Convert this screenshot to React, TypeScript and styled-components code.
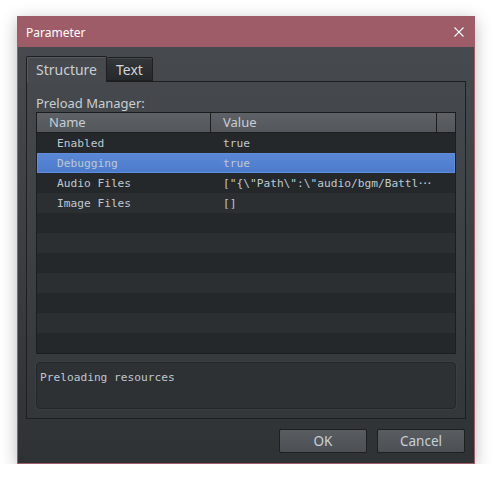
import React, { FC } from 'react';
import styled, { createGlobalStyle } from 'styled-components';

const GlobalStyle = createGlobalStyle`
  html, body {
    margin: 0;
    padding: 0;
    background: #ffffff;
  }
  * {
    box-sizing: border-box;
  }
`;

const uiFont = `'Noto Sans', 'Open Sans', sans-serif`;
const monoFont = `'DejaVu Sans Mono', 'Liberation Mono', monospace`;

const Window = styled.div`
  margin: 16px 0 0 17px;
  width: 458px;
  height: 448px;
  border: 1px solid #9e5c68;
  display: flex;
  flex-direction: column;
  box-shadow: 0 4px 16px rgba(0, 0, 0, 0.28);
  font-family: ${uiFont};
`;

const TitleBar = styled.div`
  height: 30px;
  flex: none;
  display: flex;
  align-items: center;
  justify-content: space-between;
  padding: 0 10px 0 8px;
  background: #9e5c68;
  color: #ffffff;
  font-size: 12px;
`;

const CloseButton = styled.div`
  width: 10px;
  height: 10px;
  display: flex;
`;

const Body = styled.div`
  flex: 1;
  display: flex;
  flex-direction: column;
  padding: 9px 8px 10px 8px;
  background: linear-gradient(#464a4e, #2f3235);
`;

const TabStrip = styled.div`
  display: flex;
  height: 25px;
  flex: none;
  align-items: flex-end;
  position: relative;
  z-index: 1;
`;

const Tab = styled.div<{ $active?: boolean }>`
  height: ${(p) => (p.$active ? '26px' : '24px')};
  margin-bottom: ${(p) => (p.$active ? '-1px' : '0')};
  padding: 0 9px;
  display: flex;
  align-items: center;
  font-size: 14px;
  border: 1px solid #1d1f21;
  border-bottom: ${(p) => (p.$active ? 'none' : '1px solid #1d1f21')};
  border-left: ${(p) => (p.$active ? '1px solid #1d1f21' : 'none')};
  background: ${(p) =>
    p.$active ? '#46494d' : 'linear-gradient(#34373a, #26292c)'};
  color: ${(p) => (p.$active ? '#c9ced3' : '#d0d5da')};
  box-shadow: ${(p) =>
    p.$active ? 'inset 1px 1px 0 #575b5f' : 'inset 0 1px 0 #44484c'};
  border-radius: 2px 2px 0 0;
`;

const Panel = styled.div`
  height: 338px;
  flex: none;
  border: 1px solid #1d1f21;
  display: flex;
  flex-direction: column;
  padding: 12px 9px 9px 9px;
  background: linear-gradient(#45494d, #34373a);
`;

const Label = styled.div`
  height: 18px;
  line-height: 18px;
  font-size: 13px;
  color: #c9ced3;
`;

const Table = styled.div`
  border: 1px solid #1b1d1f;
  display: flex;
  flex-direction: column;
`;

const HeaderRow = styled.div`
  display: grid;
  grid-template-columns: 174px 1fr 18px;
  height: 20px;
  border-bottom: 1px solid #1b1d1f;
  background: linear-gradient(#5e6266, #53575b);
`;

const HeaderCell = styled.div<{ $last?: boolean }>`
  padding-left: 12px;
  font-size: 13px;
  line-height: 19px;
  color: #c6ced6;
  border-right: ${(p) => (p.$last ? 'none' : '1px solid #1b1d1f')};
  overflow: hidden;
  white-space: nowrap;
`;

const Row = styled.div<{ $odd: boolean; $selected?: boolean }>`
  display: grid;
  grid-template-columns: 174px 1fr;
  height: 20px;
  line-height: 21px;
  font-family: ${monoFont};
  font-size: 11.2px;
  color: #bfc8d0;
  background: ${(p) =>
    p.$selected
      ? 'linear-gradient(#5a88d6, #4c7bcc)'
      : p.$odd
      ? '#2c2f32'
      : '#25282a'};
  box-shadow: ${(p) =>
    p.$selected ? 'inset 0 0 0 1px #5f8ddb' : 'none'};
`;

const NameCell = styled.div`
  padding-left: 20px;
  white-space: nowrap;
  overflow: hidden;
`;

const ValueCell = styled.div`
  padding-left: 12px;
  padding-right: 20px;
  white-space: nowrap;
  overflow: hidden;
`;

// elided tail of a long value: three tight centred dots
const Ellipsis = styled.span`
  letter-spacing: -2.4px;
  margin-left: -1px;
`;

const Description = styled.div`
  margin-top: 8px;
  height: 47px;
  border: 1px solid #24272a;
  border-radius: 4px;
  background: #2e3134;
  padding: 8px 3px;
  font-family: ${monoFont};
  font-size: 11.2px;
  line-height: 14px;
  color: #bfc8d0;
  box-shadow: 0 0 0 1px rgba(70, 74, 78, 0.35);
`;

const ButtonBar = styled.div`
  margin-top: 10px;
  display: flex;
  justify-content: flex-end;
  gap: 10px;
  padding-right: 1px;
`;

const Button = styled.div`
  width: 88px;
  height: 24px;
  border: 1px solid #1d1f21;
  border-radius: 2px;
  background: linear-gradient(#595d61, #4c5054);
  display: flex;
  align-items: center;
  justify-content: center;
  font-size: 13.5px;
  color: #c8d0d8;
`;

type Param = { name: string; value: string; clipped?: boolean };

const params: Param[] = [
  { name: 'Enabled', value: 'true' },
  { name: 'Debugging', value: 'true' },
  { name: 'Audio Files', value: '["{\\"Path\\":\\"audio/bgm/Battl', clipped: true },
  { name: 'Image Files', value: '[]' },
];

const ROW_COUNT = 11;
const selectedRow = 1;

const App: FC = () => {
  const rows = Array.from({ length: ROW_COUNT }, (_, i) => params[i]);

  return (
    <>
      <GlobalStyle />
      <Window>
        <TitleBar>
          <span>Parameter</span>
          <CloseButton>
            <svg width='10' height='10' viewBox='0 0 10 10'>
              <path d='M0.5 0.5 L9.5 9.5 M9.5 0.5 L0.5 9.5' stroke='#ffffff' strokeWidth='1.1' />
            </svg>
          </CloseButton>
        </TitleBar>
        <Body>
          <TabStrip>
            <Tab $active>Structure</Tab>
            <Tab>Text</Tab>
          </TabStrip>
          <Panel>
            <Label>Preload Manager:</Label>
            <Table>
              <HeaderRow>
                <HeaderCell>Name</HeaderCell>
                <HeaderCell>Value</HeaderCell>
                <HeaderCell $last />
              </HeaderRow>
              {rows.map((p, i) => (
                <Row key={i} $odd={i % 2 === 1} $selected={i === selectedRow}>
                  <NameCell>{p?.name}</NameCell>
                  <ValueCell>
                    {p?.value}
                    {p?.clipped && <Ellipsis>···</Ellipsis>}
                  </ValueCell>
                </Row>
              ))}
            </Table>
            <Description>Preloading resources</Description>
          </Panel>
          <ButtonBar>
            <Button>OK</Button>
            <Button>Cancel</Button>
          </ButtonBar>
        </Body>
      </Window>
    </>
  );
};

export default App;
